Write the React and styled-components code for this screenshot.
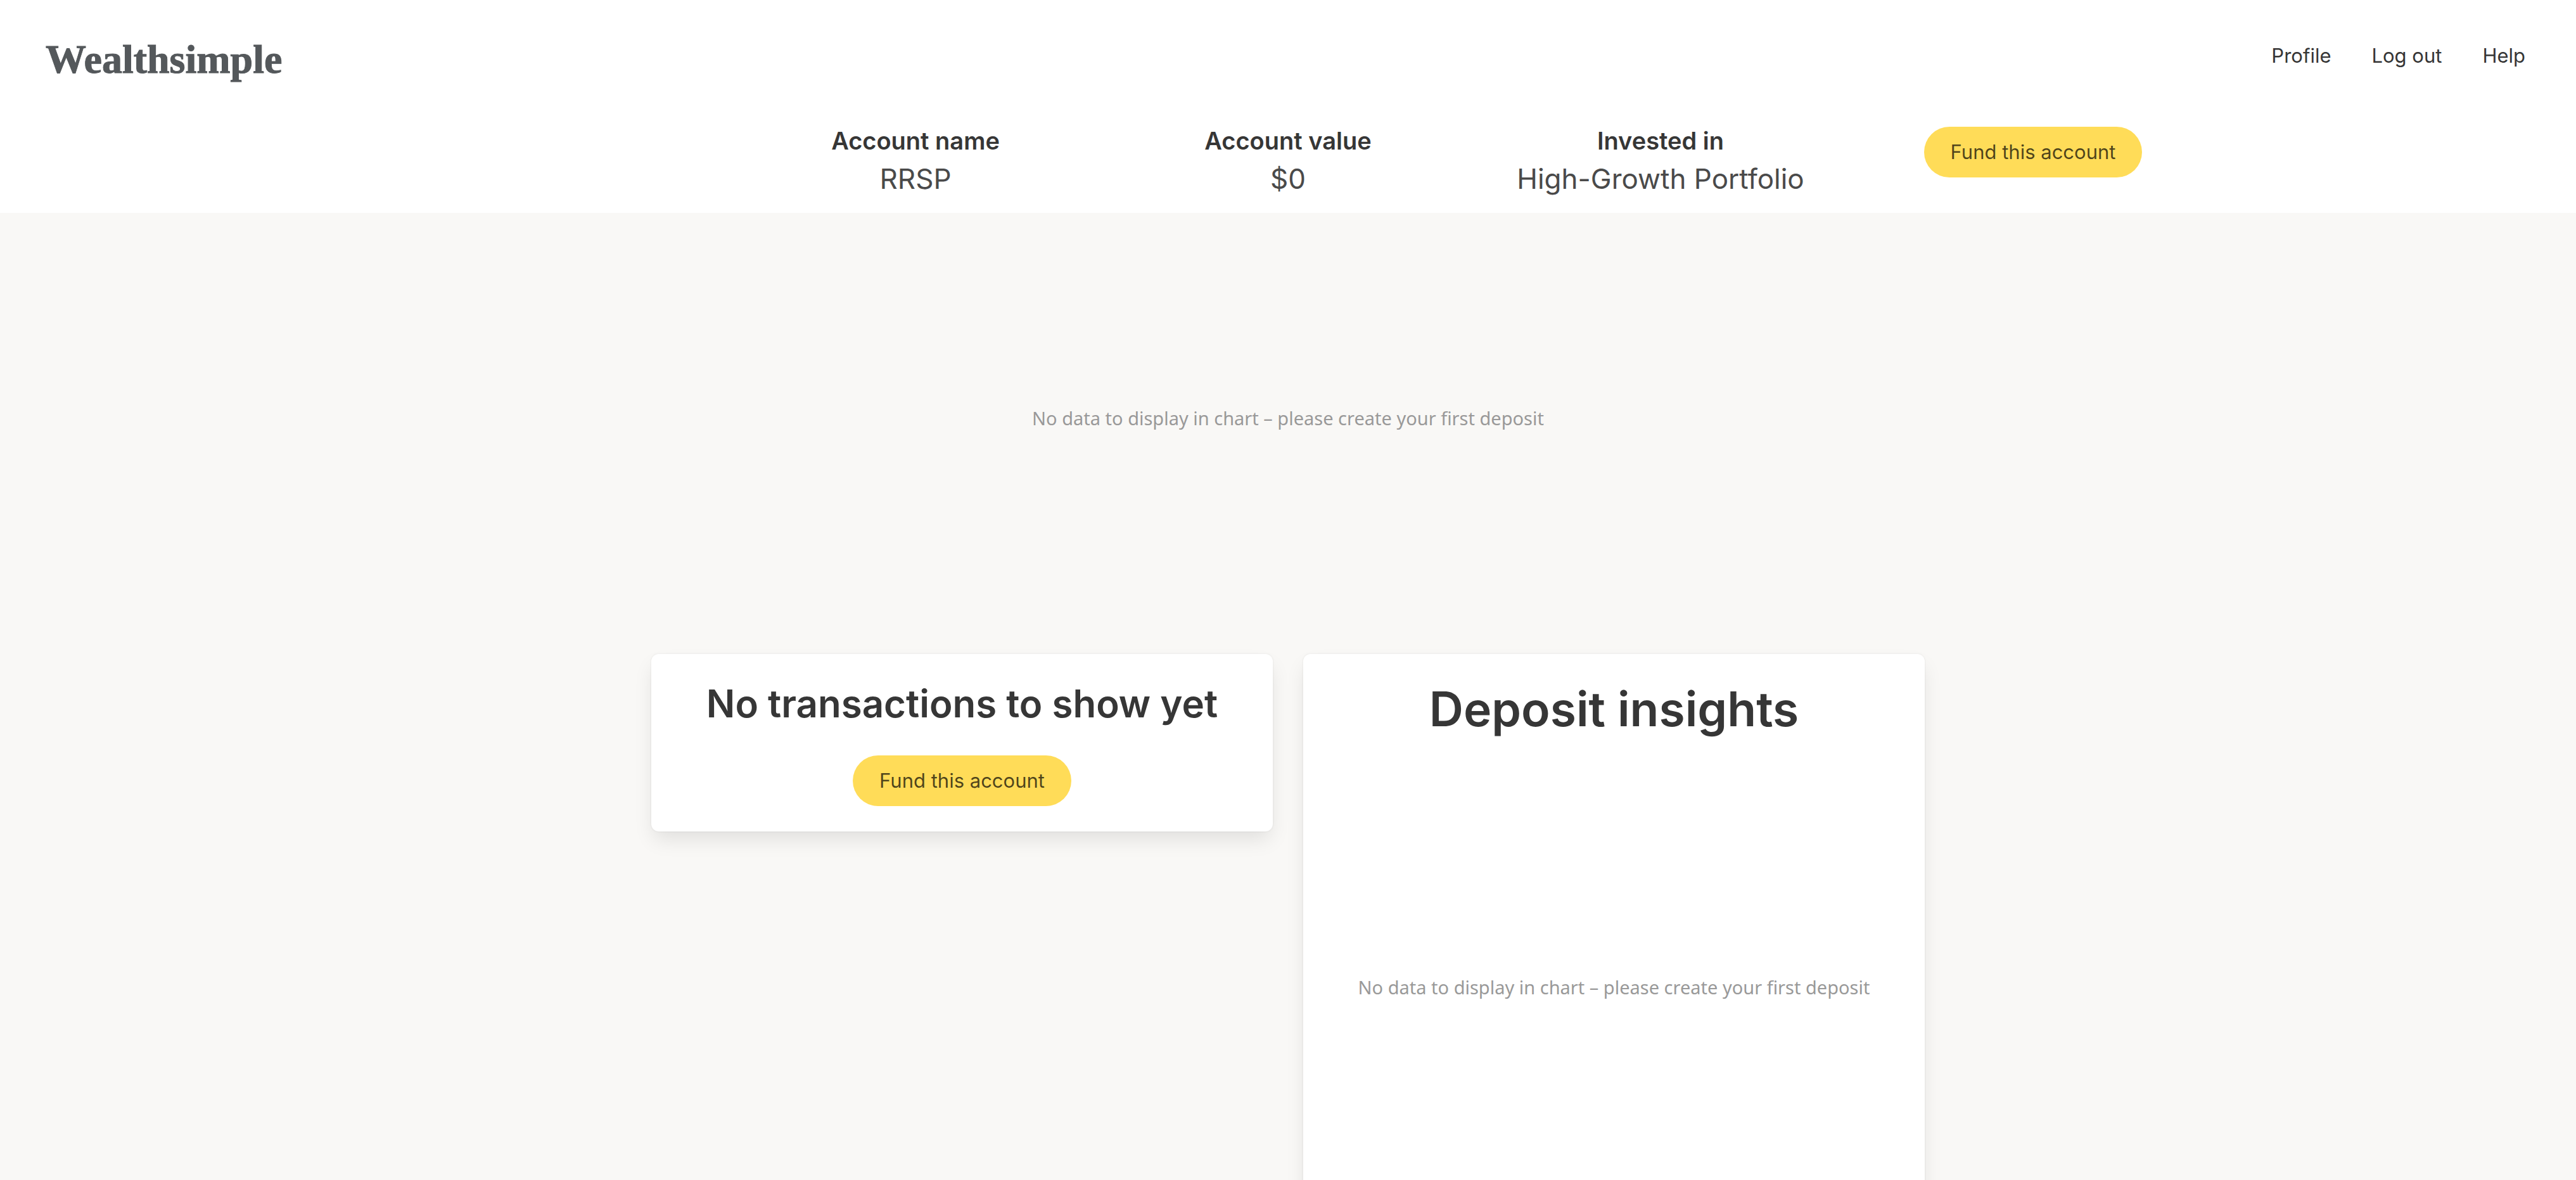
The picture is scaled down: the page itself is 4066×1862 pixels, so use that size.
import React from "react";
import styled, { createGlobalStyle } from "styled-components";

const GlobalStyle = createGlobalStyle`
  *, *::before, *::after { box-sizing: border-box; }
  body {
    margin: 0;
    background: #f9f8f6;
    color: #4a4a4a;
    font-family: Inter, "Liberation Sans", sans-serif;
    font-size: 31px;
    line-height: 48px;
  }
  h1, h2, p, dl, dt, dd { margin: 0; }
`;

const Page = styled.div`
  height: 100vh;
  overflow: hidden;
`;

const Header = styled.header`
  background: #fff;
  padding-bottom: 24px;
`;

const NavBar = styled.div`
  display: flex;
  align-items: center;
  justify-content: space-between;
  height: 176px;
  padding: 0 80px 0 72px;
`;

const Logo = styled.a`
  padding-top: 12px;
  color: #54585b;
  font-family: "Liberation Serif", serif;
  font-size: 64px;
  font-weight: 700;
  line-height: 80px;
  text-decoration: none;
  -webkit-text-stroke: 1px #54585b;
`;

const NavLinks = styled.nav`
  display: flex;
  gap: 64px;
`;

const NavLink = styled.a`
  color: #363636;
  text-decoration: none;
`;

const Summary = styled.section`
  display: grid;
  grid-template-columns: repeat(5, 1fr);
  max-width: 2940px;
  margin: 0 auto;
  padding-top: 16px;
  text-align: center;
`;

const Facts = styled.dl`
  display: grid;
  grid-column: 2 / span 3;
  grid-template-columns: repeat(3, 1fr);
`;

const Label = styled.dt`
  color: #363636;
  font-size: 38px;
  font-weight: 600;
  line-height: 60px;
`;

const Value = styled.dd`
  font-size: 44px;
  line-height: 60px;
`;

const Action = styled.div`
  padding-top: 8px;
`;

const Button = styled.button`
  height: 80px;
  padding: 0 42px;
  border: 0;
  border-radius: 40px;
  background: #ffdc58;
  color: rgba(0, 0, 0, 0.7);
  font: inherit;
  cursor: pointer;
`;

const Content = styled.main`
  padding-top: 24px;
`;

const Chart = styled.div`
  display: flex;
  align-items: center;
  justify-content: center;
  height: 600px;
  color: #999;
  font-family: "Noto Sans", sans-serif;
  font-size: 29px;
  line-height: 40px;
`;

const Cards = styled.div`
  display: grid;
  grid-template-columns: 1fr 1fr;
  align-items: start;
  gap: 48px;
  max-width: 2010px;
  margin: 72px auto;
`;

const Card = styled.section`
  display: flex;
  flex-direction: column;
  align-items: center;
  gap: ${({ $gap }) => $gap}px;
  padding: 42px 40px 40px;
  border-radius: 12px;
  background: #fff;
  box-shadow: 0 16px 32px -4px rgba(10, 10, 10, 0.1), 0 0 0 2px rgba(10, 10, 10, 0.02);
`;

const Title = styled.h2`
  color: #363636;
  font-size: ${({ $large }) => ($large ? 75 : 60)}px;
  font-weight: 600;
  line-height: ${({ $large }) => ($large ? 90 : 72)}px;
  text-align: center;
`;

const facts = [
  ["Account name", "RRSP"],
  ["Account value", "$0"],
  ["Invested in", "High-Growth Portfolio"],
];

function EmptyChart() {
  return (
    <Chart>
      <p>No data to display in chart – please create your first deposit</p>
    </Chart>
  );
}

export default function App() {
  return (
    <Page>
      <GlobalStyle />
      <Header>
        <NavBar>
          <Logo href="#home">Wealthsimple</Logo>
          <NavLinks>
            <NavLink href="#profile">Profile</NavLink>
            <NavLink href="#logout">Log out</NavLink>
            <NavLink href="#help">Help</NavLink>
          </NavLinks>
        </NavBar>
        <Summary>
          <Facts>
            {facts.map(([label, value]) => (
              <div key={label}>
                <Label>{label}</Label>
                <Value>{value}</Value>
              </div>
            ))}
          </Facts>
          <Action>
            <Button type="button">Fund this account</Button>
          </Action>
        </Summary>
      </Header>
      <Content>
        <EmptyChart />
        <Cards>
          <Card $gap={46}>
            <Title>No transactions to show yet</Title>
            <Button type="button">Fund this account</Button>
          </Card>
          <Card $gap={94}>
            <Title $large>Deposit insights</Title>
            <EmptyChart />
          </Card>
        </Cards>
      </Content>
    </Page>
  );
}
